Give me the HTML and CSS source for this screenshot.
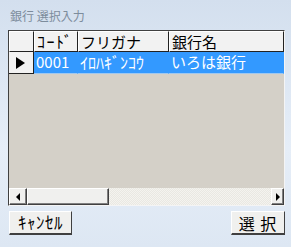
FILE: index.html
```html
<!DOCTYPE html>
<html lang="ja">
<head>
  <meta charset="UTF-8">
  <title>銀行 選択入力</title>
  <link rel="stylesheet" href="styles.css">
</head>
<body>
  <div class="window">
    <div class="title">銀行 選択入力</div>

    <div class="grid">
      <div class="rows">
        <div class="row head">
          <div class="cell rh"></div>
          <div class="cell code"><span class="hw wide">ｺｰﾄﾞ</span></div>
          <div class="cell kana">フリガナ</div>
          <div class="cell name">銀行名</div>
        </div>
        <div class="row sel">
          <div class="cell rh"><span class="arrow"></span></div>
          <div class="cell code">0001</div>
          <div class="cell kana"><span class="hw">ｲﾛﾊｷﾞﾝｺｳ</span></div>
          <div class="cell name">いろは銀行</div>
        </div>
      </div>
      <div class="hscroll">
        <div class="sbtn"><span class="tri left"></span></div>
        <div class="thumb"></div>
        <div class="track"></div>
        <div class="sbtn"><span class="tri right"></span></div>
      </div>
    </div>

    <div class="buttons">
      <button class="btn cancel"><span class="hw">ｷｬﾝｾﾙ</span></button>
      <button class="btn ok">選 択</button>
    </div>
  </div>
</body>
</html>
```

FILE: styles.css
```css
:root {
  --clr-face: #d4d0c8;
  --clr-btn: #f0f0ee;
  --clr-shadow: #808080;
  --clr-dark: #404040;
  --clr-select: #3399ff;
}
*, *::before, *::after {box-sizing: border-box; margin: 0}
body {
  width: 291px;
  height: 247px;
  overflow: hidden;
  background: linear-gradient(#d3dfee, #e6eef8 60%, #dde7f3);
  font-family: "Noto Sans CJK JP", sans-serif;
  color: #000;
}
.window {
  padding: 0 6px 0 8px;
  display: flex;
  flex-direction: column;
}
.title {
  height: 30px;
  padding: 9px 0 0 2px;
  font-size: 12px;
  line-height: 14px;
  color: #7d8c9c;
}
.grid {
  height: 176px;
  display: flex;
  flex-direction: column;
  border-top: 1px solid var(--clr-dark);
  border-left: 1px solid var(--clr-dark);
  border-right: 1px solid #f4f4f4;
  border-bottom: 1px solid #f4f4f4;
  background: var(--clr-face);
}
.rows {
  flex: 1;
}
.row {
  display: flex;
  font-size: 15px;
  white-space: nowrap;
}
.cell {
  padding-left: 2px;
}
.rh {width: 25px}
.code {width: 44px}
.kana {width: 91px}
.name {flex: 1}

/* half-width kana come out small in the CJK font */
.hw {font-size: 16px}
.hw.wide {letter-spacing: 1.5px}

.head {
  height: 21px;
  line-height: 19px;
}
.head .cell {
  background: #f2f2f2;
  border-top: 1px solid #fff;
  border-left: 1px solid #fff;
  border-right: 1px solid #222;
  border-bottom: 1px solid #222;
}
.sel {
  height: 22px;
  line-height: 20px;
}
.sel .cell {
  background: var(--clr-select);
  color: #fff;
  border-right: 1px solid var(--clr-select);
  border-bottom: 1px solid #a0c8ef;
}
.sel .rh {
  background: #f2f2f2;
  border-right: 1px solid #222;
  border-bottom: 1px solid #222;
  display: flex;
  align-items: center;
  padding-left: 7px;
}
.arrow {
  width: 0;
  height: 0;
  border-top: 6px solid transparent;
  border-bottom: 6px solid transparent;
  border-left: 9px solid #000;
}

.hscroll {
  height: 17px;
  display: flex;
  background: repeating-conic-gradient(#f4f3ef 0 25%, #e9e8e2 0 50%) 0 0 / 2px 2px;
}
.sbtn, .thumb {
  background: var(--clr-btn);
  border-top: 1px solid #fff;
  border-left: 1px solid #fff;
  border-right: 1px solid var(--clr-dark);
  border-bottom: 1px solid var(--clr-dark);
  box-shadow: inset -1px -1px 0 var(--clr-shadow);
}
.sbtn {
  width: 18px;
  display: flex;
  align-items: center;
  justify-content: center;
}
.sbtn:last-child {width: 13px}
.thumb {width: 82px}
.track {flex: 1}
.tri {
  width: 0;
  height: 0;
  border-top: 4px solid transparent;
  border-bottom: 4px solid transparent;
}
.tri.left {border-right: 4px solid #000}
.tri.right {border-left: 4px solid #000}

.buttons {
  display: flex;
  justify-content: space-between;
  padding: 5px 0 0 1px;
}
.btn {
  font-family: "Noto Sans CJK JP", sans-serif;
  font-size: 15px;
  line-height: 20px;
  height: 24px;
  padding: 0;
  background: var(--clr-btn);
  border-top: 1px solid #fff;
  border-left: 1px solid #fff;
  border-right: 1px solid var(--clr-dark);
  border-bottom: 2px solid var(--clr-dark);
  color: #000;
}
.cancel {width: 63px}
.cancel .hw {font-size: 17px; letter-spacing: 0.5px}
.ok {width: 54px; font-size: 16px; letter-spacing: 1px}
```
